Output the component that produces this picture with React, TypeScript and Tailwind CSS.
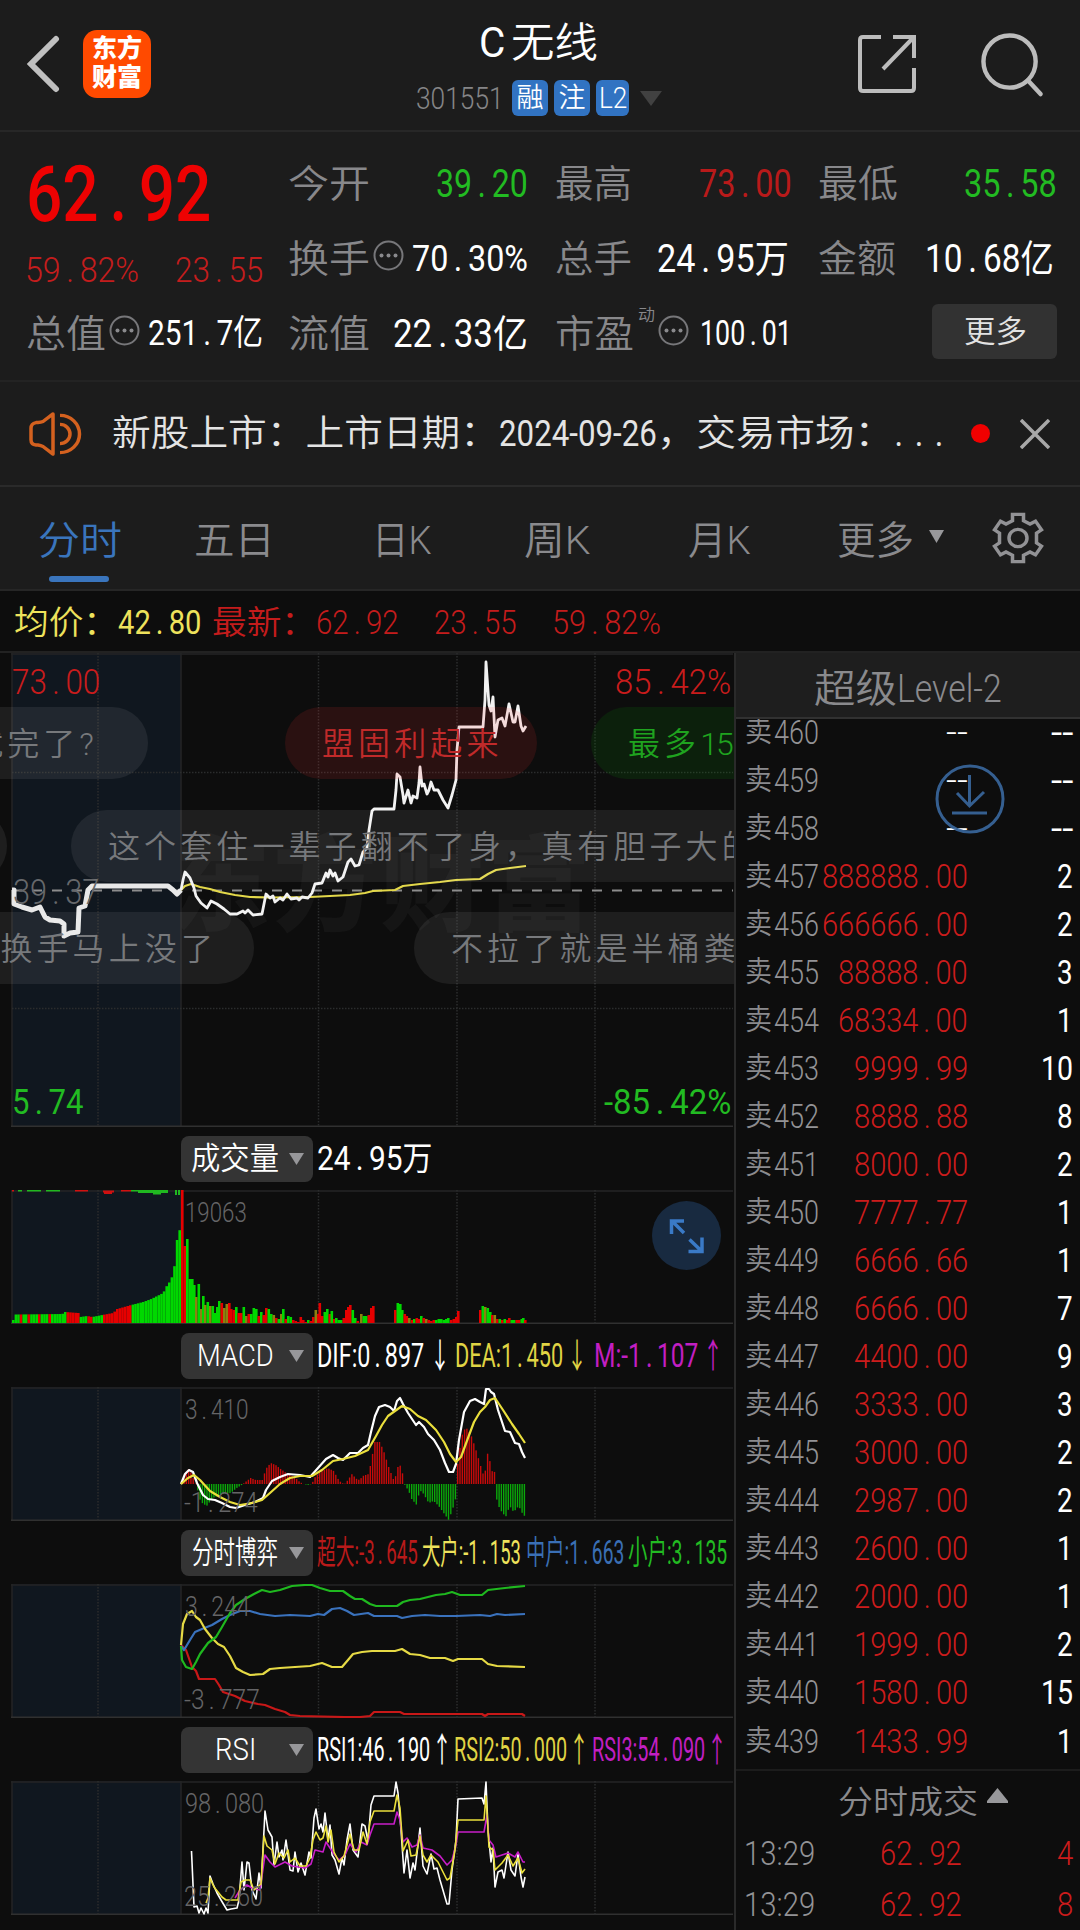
// src/App.tsx

import React, { useLayoutEffect, useRef, useState } from 'react';
import clsx from 'clsx';

interface FitProps {
  w: number;
  children: string;
  className?: string;
}

// Single line of text squeezed or stretched horizontally to a given width
function Fit({ w, children, className }: FitProps) {
  const ref = useRef<HTMLSpanElement>(null);
  const [scale, setScale] = useState(1);

  useLayoutEffect(() => {
    if (ref.current) setScale(w / ref.current.offsetWidth);
  }, [w, children]);

  return (
    <span className={clsx('inline-block shrink-0 whitespace-nowrap leading-none', className)} style={{ width: w }}>
      <span ref={ref} className="inline-block origin-left" style={{ transform: `scaleX(${scale})` }}>
        {children.split(/(\.)/).map((part, i) =>
          part === '.' ? (
            <span key={i} className="ml-[0.17em] tracking-[0.18em]">.</span>
          ) : (
            part
          )
        )}
      </span>
    </span>
  );
}

function MoreDots() {
  return (
    <svg className="h-[31px] w-[31px] shrink-0" viewBox="0 0 31 31" fill="none">
      <circle cx="15.5" cy="15.5" r="14" stroke="#77777a" strokeWidth="2" />
      <g fill="#8a8a8d">
        <circle cx="8.5" cy="15.5" r="2" />
        <circle cx="15.5" cy="15.5" r="2" />
        <circle cx="22.5" cy="15.5" r="2" />
      </g>
    </svg>
  );
}

/* ---------- header ---------- */

function Header() {
  return (
    <header className="flex h-[132px] items-start border-b-2 border-[#272727]">
      <svg className="ml-[26px] mt-[35px] h-[58px] w-[34px]" viewBox="0 0 34 58" fill="none">
        <path d="M30 4 L5 29 L30 54" stroke="#c0c0c0" strokeWidth="6" strokeLinecap="round" />
      </svg>
      <div className="ml-[23px] mt-[30px] flex h-[68px] w-[68px] flex-col items-center justify-center rounded-[14px] bg-[#ff4a00] pb-[3px] text-[25px] font-black leading-[29px] text-white">
        <span>东方</span>
        <span>财富</span>
      </div>

      <div className="ml-[265px] mt-[21px] flex w-[250px] flex-col">
        <div className="flex h-[44px] items-center gap-[6px] pl-[63px] text-white">
          <Fit w={26} className="text-[42px] font-normal">C</Fit>
          <Fit w={87} className="text-[41px]">无线</Fit>
        </div>
        <div className="mt-[15px] flex h-[36px] items-center">
          <Fit w={88} className="text-[32px] text-[#858587]">301551</Fit>
          <span className="ml-[8px] flex h-[36px] w-[36px] items-center justify-center rounded-md bg-[#3173c2] text-[27px] leading-none text-white">融</span>
          <span className="ml-[6px] flex h-[36px] w-[36px] items-center justify-center rounded-md bg-[#3173c2] text-[27px] leading-none text-white">注</span>
          <span className="ml-[6px] flex h-[36px] w-[33px] items-center justify-center rounded-md bg-[#3173c2] text-white">
            <Fit w={28} className="text-[29px]">L2</Fit>
          </span>
          <svg className="ml-[11px] h-[15px] w-[22px]" viewBox="0 0 22 16" preserveAspectRatio="none">
            <path d="M0 0 H22 L11 16 Z" fill="#414141" />
          </svg>
        </div>
      </div>

      <svg className="ml-[191px] mt-[34px] h-[60px] w-[60px]" viewBox="0 0 60 60" fill="none" stroke="#bcbcbc" strokeWidth="4">
        <path d="M24 3 H6 Q3 3 3 6 V54 Q3 57 6 57 H54 Q57 57 57 54 V34" />
        <path d="M36 3 H57 V24 M55 5 L26 35" />
      </svg>
      <svg className="ml-[64px] mt-[31px] h-[67px] w-[64px]" viewBox="0 0 64 68" fill="none" stroke="#bcbcbc" strokeWidth="4.5">
        <circle cx="28.500" cy="31" r="26.500" />
        <path d="M47 50 L60 64" strokeLinecap="round" />
      </svg>
    </header>
  );
}

/* ---------- quote ---------- */

interface CellProps {
  label: string;
  labelW: number;
  value: string;
  valueW: number;
  tone?: string;
  size?: string;
  dots?: boolean;
  sup?: string;
  className?: string;
}

function Cell({ label, labelW, value, valueW, tone = 'text-white', size = 'text-[38px]', dots, sup, className }: CellProps) {
  return (
    <div className={clsx('flex items-center justify-between', className)}>
      <div className="flex items-center">
        <Fit w={labelW} className="text-[38px] text-[#88888b]">{label}</Fit>
        {sup && <span className="mb-[36px] ml-[4px] text-[17px] leading-none text-[#88888b]">{sup}</span>}
        {dots && <div className="mb-[7px] ml-[3px]"><MoreDots /></div>}
      </div>
      <Fit w={valueW} className={clsx('font-normal', size, tone)}>{value}</Fit>
    </div>
  );
}

function Quote() {
  return (
    <section className="flex h-[250px] border-b-2 border-[#232323] pl-[26px]">
      <div className="flex w-[237px] flex-col pt-[16px]">
        <div className="flex h-[94px] items-center font-medium text-[#ee0202]">
          <Fit w={185} className="text-[77px]">62.92</Fit>
        </div>
        <div className="flex h-[56px] items-center justify-between text-[35px] text-[#c41d1d]">
          <Fit w={114} className="-ml-px">59.82%</Fit>
          <Fit w={88}>23.55</Fit>
        </div>
        <Cell className="h-[71px]" label="总值" labelW={80} dots value="251.7亿" valueW={115} size="text-[35px]" />
      </div>

      <div className="ml-[25px] flex w-[240px] flex-col pt-[14px]">
        <Cell className="h-[75px]" label="今开" labelW={82} value="39.20" valueW={92} tone="text-[#22bb22]" />
        <Cell className="h-[75px]" label="换手" labelW={82} dots value="70.30%" valueW={116} size="text-[37px]" />
        <Cell className="h-[75px]" label="流值" labelW={82} value="22.33亿" valueW={135} />
      </div>

      <div className="ml-[27px] flex w-[237px] flex-col pt-[14px]">
        <Cell className="h-[75px]" label="最高" labelW={77} value="73.00" valueW={93} tone="text-[#b91a1a]" />
        <Cell className="h-[75px] pr-[3px]" label="总手" labelW={77} value="24.95万" valueW={132} />
        <Cell className="h-[75px]" label="市盈" labelW={79} sup="动" dots value="100.01" valueW={92} size="text-[35px]" />
      </div>

      <div className="ml-[26px] flex w-[239px] flex-col pt-[14px]">
        <Cell className="h-[75px]" label="最低" labelW={80} value="35.58" valueW={93} tone="text-[#22bb22]" />
        <Cell className="h-[75px] pr-[3px]" label="金额" labelW={78} value="10.68亿" valueW={129} />
        <div className="flex h-[70px] items-center justify-end">
          <button className="flex h-[55px] w-[125px] items-center justify-center rounded-md bg-[#323232] text-[#e2e2e2]">
            <Fit w={63} className="text-[31px]">更多</Fit>
          </button>
        </div>
      </div>
    </section>
  );
}

/* ---------- notice + tabs ---------- */

function Notice() {
  return (
    <section className="flex h-[105px] items-center border-b-2 border-[#2a2a2a] text-[36px] text-[#e4e4e4]">
      <svg className="ml-[28px] h-[44px] w-[54px]" viewBox="0 0 54 46" preserveAspectRatio="none" fill="none" stroke="#d4611f" strokeWidth="3.500">
        <path d="M25 2 L15 10 Q13 11 10 11 H8 Q3 12 3 17 V29 Q3 34 8 34.500 H10 Q13 35 15 36 L25 44 Z" strokeLinejoin="round" />
        <path d="M32 3.500 A19.500 19.500 0 0 1 32 42.500 M32 13 A10 10 0 0 1 32 33" />
      </svg>
      <Fit w={387} className="ml-[30px]">新股上市：上市日期：</Fit>
      <Fit w={158} className="font-normal">2024-09-26</Fit>
      <Fit w={237}>，交易市场：</Fit>
      <Fit w={60} className="-ml-[5px] font-normal">...</Fit>
      <span className="ml-[22px] h-[19px] w-[19px] rounded-full bg-[#f00000]" />
      <svg className="ml-[30px] h-[30px] w-[30px]" viewBox="0 0 30 30" stroke="#a8a8a8" strokeWidth="3.500">
        <path d="M1 1 L29 29 M29 1 L1 29" />
      </svg>
    </section>
  );
}

function Tabs() {
  return (
    <nav className="flex h-[104px] items-center border-b-2 border-[#262626] text-[39px] text-[#8a8a8d]">
      <div className="relative ml-[38px] flex h-full items-center pt-[6px] text-[#3a75bd]">
        <Fit w={84}>分时</Fit>
        <span className="absolute bottom-[7px] left-[11px] h-[6px] w-[60px] rounded-full bg-[#3a75bd]" />
      </div>
      <div className="flex items-center pt-[7px]">
        <Fit w={81} className="ml-[72px]">五日</Fit>
        <Fit w={60} className="ml-[97px]">日K</Fit>
        <Fit w={67} className="ml-[92px]">周K</Fit>
        <Fit w={63} className="ml-[97px]">月K</Fit>
        <Fit w={77} className="ml-[86px]">更多</Fit>
      </div>
      <svg className="mb-[4px] ml-[15px] h-[13px] w-[15px]" viewBox="0 0 15 13">
        <path d="M0 0 H15 L7.500 13 Z" fill="#98989b" />
      </svg>
      <svg className="ml-[48px] h-[52px] w-[52px]" viewBox="0 0 52 54" preserveAspectRatio="none" fill="none" stroke="#929295" strokeWidth="3.500">
        <path d="M20.500 2.500 H31.500 V9 L38 12.500 L43.500 9.500 L49.500 18.500 L44.500 22 V32 L49.500 35.500 L43.500 44.500 L38 41.500 L31.500 45 V51.500 H20.500 V45 L14 41.500 L8.500 44.500 L2.500 35.500 L7.500 32 V22 L2.500 18.500 L8.500 9.500 L14 12.500 L20.500 9 Z" />
        <circle cx="26" cy="27" r="9" />
      </svg>
    </nav>
  );
}

function AverageBar() {
  return (
    <div className="flex h-[62px] items-center border-b-2 border-[#222222] pl-[14px] pt-[3px] text-[33px] text-[#c41c1c]">
      <Fit w={104} className="text-[#eee25c]">均价：</Fit>
      <Fit w={83} className="font-normal text-[#eee25c]">42.80</Fit>
      <Fit w={104} className="ml-[11px]">最新：</Fit>
      <Fit w={83}>62.92</Fit>
      <Fit w={83} className="ml-[35px]">23.55</Fit>
      <Fit w={109} className="ml-[35px]">59.82%</Fit>
    </div>
  );
}

/* ---------- chart data ---------- */

const PRE_PRICE = '12,890 14,890 14,904 22,907 32,910 40,907 45,917 50,920 60,921 64,924 64,936 70,933 78,932 79,908 85,906 88,890 92,886 168,886 173,890 177,894 181,890';
const PRICE = '181,890 183,880 185,872 190,878 194,888 196,896 201,903 207,908 211,901 217,904 224,909 230,914 237,914 243,911 245,913 248,910 253,915 262,914 266,894 270,898 273,896 275,902 280,898 283,900 287,894 291,899 297,898 299,900 302,897 308,898 312,893 315,884 322,883 326,873 328,877 330,870 333,876 335,873 338,881 343,877 348,862 351,859 355,866 359,865 363,852 367,848 369,830 372,811 374,809 394,809 396,790 397,774 400,777 403,795 404,803 408,790 411,803 413,796 417,798 419,783 420,767 422,786 424,784 427,794 429,790 431,782 434,790 438,790 443,800 448,808 452,795 456,780 457,750 459,727 483,727 485,700 486,662 489,705 491,711 493,697 495,737 498,720 502,718 505,726 509,704 513,722 515,722 518,706 521,726 523,731 526,726';
const AVERAGE = '181,890 185,886 191,884 200,887 210,889 220,892 235,895 250,897 270,897.5 310,897 330,896 350,895 365,893 373,891 395,890 403,886 420,884 440,882 456,880 480,879 488,874 496,870 510,868 526,866';

const DIF = '181,1484 185,1474 189,1470 193,1472 197,1483 203,1495 208,1499 215,1500 222,1503 230,1507 236,1508 245,1505 255,1502 263,1498 266,1490 272,1481 280,1477 288,1474 300,1475 310,1477 318,1468 326,1459 333,1455 338,1458 343,1460 350,1453 358,1453 363,1448 368,1445 371,1432 375,1416 379,1407 385,1405 390,1407 394,1411 397,1401 400,1398 403,1404 408,1413 412,1419 416,1425 419,1422 424,1427 428,1434 434,1440 440,1450 445,1463 449,1472 453,1472 456,1464 459,1440 464,1412 470,1401 475,1399 480,1402 484,1404 486,1389 489,1389 491,1392 494,1394 498,1410 505,1431 510,1432 515,1443 519,1444 522,1452 525,1458';
const DEA = '181,1484 188,1478 194,1475 200,1480 210,1491 220,1497 230,1502 240,1505 252,1503 262,1500 270,1493 280,1484 290,1478 300,1476 312,1476 322,1470 333,1461 343,1459 355,1456 368,1450 376,1436 382,1425 388,1416 395,1411 402,1406 410,1409 418,1416 426,1420 436,1430 444,1442 450,1454 456,1462 461,1457 468,1438 474,1422 480,1412 485,1407 490,1400 495,1398 503,1410 512,1424 519,1434 525,1443';

const GAME_SMALL = '181,1646 182,1660 186,1667 192,1669 196,1662 200,1654 208,1643 216,1637 222,1627 230,1613 236,1605 245,1599 254,1594 262,1590 270,1592 280,1590 292,1586 305,1585 312,1585 320,1588 330,1591 343,1591 350,1596 355,1599 362,1599 370,1604 376,1606 397,1606 403,1602 410,1600 420,1599 436,1595 445,1594 452,1592 460,1595 482,1595 488,1590 505,1588 525,1586';
const GAME_MID = '181,1646 184,1650 190,1640 195,1632 202,1629 212,1625 222,1619 230,1615 240,1611 250,1611 260,1614 275,1616 290,1615 310,1616 318,1614 324,1615 332,1609 340,1608 347,1611 354,1615 368,1613 374,1616 397,1616 402,1618 412,1616 425,1615 440,1616 456,1616 480,1615 490,1616 497,1614 505,1615 525,1614';
const GAME_BIG = '181,1645 183,1624 187,1614 192,1611 196,1617 200,1620 205,1629 212,1638 218,1644 224,1647 230,1656 236,1668 243,1672 250,1675 263,1674 270,1669 280,1668 295,1667 310,1666 322,1663 332,1667 342,1667 348,1660 353,1654 362,1652 372,1651 395,1651 402,1649 410,1654 420,1655 430,1658 445,1658 453,1661 458,1659 482,1659 488,1664 497,1666 525,1667';
const GAME_SUPER = '181,1645 186,1650 192,1667 196,1671 199,1679 215,1679 219,1685 223,1692 235,1696 245,1701 258,1704 265,1705 275,1709 285,1712 290,1715 300,1716 345,1717 360,1717 370,1716 374,1712 400,1712 404,1714 482,1714 485,1716 488,1714 522,1714 525,1716';

const RSI1 = '191.5,1851 194,1907 197,1906 199,1913 201,1908 204,1914 206,1908 208,1913 210,1876 213,1884 217,1893 221,1900 224,1905 227,1910 231,1909 237,1908 239,1900 242,1862 244,1890 247,1862 249,1863 252,1890 256,1899 259,1873 261,1888 265,1811 268,1830 272,1837 274,1865 277,1842 279,1857 282,1850 283,1860 286,1840 290,1870 293,1871 295,1852 298,1872 301,1863 305,1875 309,1852 311,1858 314,1818 316,1809 319,1829 321,1824 323,1832 325,1813 328,1840 330,1825 332,1855 335,1860 339,1874 342,1858 344,1865 347,1840 350,1824 353,1850 358,1857 362,1824 365,1826 368,1841 371,1805 374,1796 394,1796 396,1782 398,1793 401,1830 404,1873 407,1850 410,1878 413,1863 415,1870 420,1828 423,1866 427,1874 431,1854 434,1869 437,1868 440,1880 447,1904 449,1904 452,1870 456,1840 458,1799 482,1798 484,1804 486,1782 488,1830 491,1862 493,1848 495,1887 498,1872 502,1870 504,1878 508,1852 511,1870 515,1876 518,1854 521,1877 523,1887 525,1877';
const RSI2 = '206,1903 208,1898 210,1878 214,1887 218,1892 222,1897 226,1900 238,1900 241,1882 245,1880 250,1880 254,1890 261,1884 264,1836 267,1846 272,1850 275,1864 279,1853 284,1858 288,1850 290,1862 295,1858 300,1866 306,1866 310,1858 313,1840 316,1832 320,1840 323,1838 326,1826 328,1842 331,1830 334,1852 339,1862 344,1856 350,1834 354,1850 359,1850 363,1832 367,1844 370,1822 374,1811 394,1811 397,1795 400,1808 403,1851 408,1840 411,1856 416,1855 420,1836 423,1855 427,1862 431,1855 438,1862 447,1880 450,1878 455,1850 458,1820 484,1820 486,1796 489,1847 493,1850 495,1870 502,1863 508,1855 513,1866 518,1858 522,1873 525,1869';
const RSI3 = '235,1898 240,1890 247,1885 252,1888 260,1890 265,1855 270,1862 275,1867 285,1862 292,1866 305,1868 311,1864 315,1850 323,1852 326,1842 330,1848 334,1854 339,1860 345,1855 350,1844 356,1852 361,1842 367,1845 370,1835 374,1824 394,1824 397,1812 400,1820 403,1842 407,1838 412,1847 417,1845 420,1835 423,1848 432,1850 440,1856 447,1865 452,1860 456,1845 458,1832 484,1832 487,1815 489,1840 493,1845 496,1857 508,1853 515,1857 518,1852 523,1862 525,1862';

// [x, height] key points, bars in between are interpolated
const HIST_KEYS: [number, number][] = [
  [181, 0], [184, 8], [187, 16], [190, 12], [195, 0], [197, -6], [200, -18], [206, -22], [212, -14], [222, -10], [230, -9], [236, -4], [241, -1],
  [246, 3], [250, 6], [255, 4], [262, 4], [265, 15], [270, 21], [275, 19], [280, 15], [287, 10], [294, 7], [299, 2], [303, 0], [307, -1], [311, 0],
  [315, 8], [320, 12], [327, 16], [333, 13], [338, 4], [341, 1], [344, 0], [348, 5], [351, 10], [356, 5], [359, 4], [362, 8], [368, 10], [371, 25],
  [374, 42], [379, 42], [383, 33], [388, 17], [393, 4], [394, 2], [396, 15], [399, 20], [402, 10], [403, 1], [408, -7], [411, -15], [416, -21],
  [419, -6], [423, -10], [428, -19], [433, -17], [438, -22], [443, -29], [448, -36], [452, -25], [456.5, -9], [457, 20], [461, 48], [465, 57],
  [470, 50], [475, 35], [480, 18], [484, 5], [486, 33], [489, 24], [491, 13], [494, 12], [495, -12], [499, -25], [505, -33], [509, -22],
  [513, -28], [518, -22], [523, -32], [526, -31],
];

function sample(keys: [number, number][], x: number) {
  for (let i = 1; i < keys.length; i++) {
    const [x0, y0] = keys[i - 1];
    const [x1, y1] = keys[i];
    if (x <= x1) return y0 + ((y1 - y0) * (x - x0)) / (x1 - x0);
  }
  return 0;
}

// [x, height, colour] r = red, g = green, o = mixed
type Bar = [number, number, 'r' | 'g' | 'o'];

const COLORS = { r: '#e60000', g: '#00d800', o: '#8d8110' };

const VOLUME: Bar[] = [
  [182, 133, 'r'], [184.5, 77, 'r'], [187, 84, 'g'], [189.500, 44, 'g'], [192, 44, 'g'], [194, 38, 'g'], [196, 26, 'o'], [198.500, 39, 'g'], [201, 14, 'o'],
  [203, 27, 'g'], [205, 18, 'o'], [207.500, 21, 'g'], [210, 17, 'o'], [212.500, 17, 'g'], [215, 10, 'g'], [217, 16, 'g'], [219, 22, 'g'], [221.500, 20, 'r'],
  [224, 15, 'o'], [226.500, 19, 'o'], [229, 20, 'r'], [231, 14, 'r'], [233.500, 13, 'r'], [236, 16, 'g'], [238.500, 10, 'r'], [241, 10, 'r'], [243.500, 16, 'g'],
  [246, 7, 'o'], [248.500, 9, 'r'], [251, 9, 'g'], [253.500, 15, 'g'], [256, 14, 'g'], [258.500, 7, 'r'], [261, 11, 'g'], [263.500, 8, 'r'], [266, 15, 'r'],
  [268.500, 14, 'g'], [271, 9, 'g'], [273.500, 8, 'o'], [276, 5, 'r'], [278.500, 4, 'g'], [281, 9, 'o'], [283, 14, 'g'], [285.500, 4, 'r'], [288, 7, 'g'],
  [290.500, 6, 'g'], [293, 3, 'r'], [295.500, 2, 'r'], [298, 1, 'r'], [300.500, 6, 'r'], [303, 3, 'r'], [305.500, 1, 'r'], [308, 3, 'g'], [310.500, 2, 'r'],
  [313, 6, 'r'], [315.500, 13, 'o'], [318, 9, 'r'], [319.500, 20, 'r'], [322, 7, 'r'], [324.500, 11, 'g'], [327, 14, 'g'], [329.500, 9, 'r'], [331.500, 12, 'g'],
  [334, 4, 'r'], [336, 5, 'g'], [338.500, 3, 'g'], [341, 3, 'g'], [343.500, 5, 'r'], [346, 13, 'r'], [348, 16, 'r'], [350, 18, 'r'], [352.500, 13, 'g'],
  [355, 5, 'g'], [357.500, 2, 'r'], [361, 9, 'o'], [363.500, 7, 'g'], [366, 7, 'g'], [368.500, 8, 'r'], [371, 15, 'r'], [373, 17, 'r'], [395, 13, 'r'],
  [397.500, 20, 'g'], [400, 19, 'g'], [402, 13, 'g'], [404.500, 9, 'r'], [406.500, 7, 'r'], [409, 5, 'o'], [412, 3, 'r'], [414, 4, 'g'], [416.500, 5, 'r'],
  [419, 4, 'r'], [421, 7, 'g'], [423.500, 5, 'r'], [426, 4, 'o'], [428.500, 3, 'r'], [431, 2, 'r'], [433.500, 3, 'r'], [436, 3, 'g'], [438.500, 4, 'g'],
  [441, 4, 'g'], [443.500, 3, 'g'], [446, 4, 'g'], [448, 5, 'g'], [451, 3, 'r'], [453.500, 4, 'r'], [456, 6, 'r'], [458, 12, 'r'], [480, 13, 'r'],
  [482.500, 17, 'g'], [485, 16, 'o'], [487.500, 15, 'g'], [490, 11, 'g'], [492, 8, 'r'], [494.500, 8, 'o'], [497, 4, 'r'], [499.500, 4, 'g'], [502, 3, 'r'],
  [504.500, 4, 'g'], [507, 3, 'r'], [509, 5, 'r'], [511.500, 3, 'g'], [514, 3, 'g'], [516.500, 3, 'r'], [519, 3, 'r'], [521.500, 4, 'g'], [523, 5, 'g'], [525, 3, 'r'],
];

const PRE_KEYS: [number, number][] = [
  [12, 3], [14, 8.500], [61, 9], [64, 11], [77, 10], [79, 6], [86, 7], [91, 6], [101, 8], [112, 10], [116, 14], [130, 18], [142, 21], [150, 24],
  [156, 27], [162, 30], [166, 38], [170, 43], [172, 52], [174, 60], [175.500, 62], [176, 97], [178, 96], [179, 88], [182, 87],
];

function preColor(x: number) {
  if (x > 130) return COLORS.g;
  if (x > 101) return COLORS.r;
  if (x > 93) return COLORS.g;
  if (x > 85) return x > 90 ? COLORS.g : COLORS.r;
  if (x > 77) return COLORS.g;
  if (x > 65) return COLORS.r;
  return Math.round(x / 2.4) % 4 === 0 ? COLORS.r : COLORS.g;
}

/* ---------- charts ---------- */

interface FrameProps {
  top: number;
  height: number;
  className: string;
  children: React.ReactNode;
}

function Frame({ top, height, className, children }: FrameProps) {
  const bottom = top + height;
  return (
    <svg className={clsx('block w-[734px]', className)} viewBox={`0 ${top} 734 ${height}`} fill="none" strokeLinejoin="round">
      <rect x="12" y={top} width="169" height={height} fill="#10171f" />
      <g stroke="#242526" strokeWidth="1.500">
        <path d={`M11 ${top + 1} H733 M12 ${top} V${bottom} M181 ${top} V${bottom}`} />
        <path d={`M11 ${bottom - 0.8} H733`} stroke="#303030" />
        <path d={`M98 ${top} V${bottom} M318.500 ${top} V${bottom} M457 ${top} V${bottom} M595 ${top} V${bottom}`} strokeDasharray="1.500 1.500" stroke="#2b2c2d" />
      </g>
      {children}
    </svg>
  );
}

interface PillProps {
  className: string;
  children?: React.ReactNode;
}

function Pill({ className, children }: PillProps) {
  return (
    <div className={clsx('absolute flex h-[72px] items-center whitespace-nowrap rounded-full px-[37px] pt-[2px] text-[32px] leading-none tracking-[4.1px]', className)}>
      {children}
    </div>
  );
}

function PriceChart() {
  return (
    <div className="relative h-[474px] overflow-hidden">
      <span className="absolute left-[166px] top-[183px] whitespace-nowrap text-[104px] font-black leading-none tracking-[3px] text-[#151515]">东方财富</span>
      <div className="relative">
        <Frame top={653} height={474} className="h-[474px]">
          <path d="M12 772.500 H733 M12 1008.500 H733" stroke="#2b2c2d" strokeWidth="1.500" strokeDasharray="1.500 1.500" />
          <path d="M12 890.500 H733" stroke="#8c8c8c" strokeWidth="2" strokeDasharray="10 10" />
          <polyline points={AVERAGE} stroke="#e3d84a" strokeWidth="2.200" />
          <polyline points={PRE_PRICE} stroke="#e8e8e8" strokeWidth="5" />
          <polyline points={PRICE} stroke="#f2f2f2" strokeWidth="2.800" />
        </Frame>
      </div>

      <div className="absolute left-[12px] top-[12px] flex text-[35px] text-[#c91c1c]"><Fit w={88}>73.00</Fit></div>
      <div className="absolute right-[3px] top-[12px] flex text-[35px] text-[#c91c1c]"><Fit w={116}>85.42%</Fit></div>
      <div className="absolute left-[13px] top-[222px] flex text-[35px] text-[#66686b]"><Fit w={86}>39.37</Fit></div>
      <div className="absolute left-[12px] top-[432px] flex text-[35px] font-normal text-[#22bb22]"><Fit w={71}>5.74</Fit></div>
      <div className="absolute right-[3px] top-[432px] flex text-[35px] font-normal text-[#22bb22]"><Fit w={127}>-85.42%</Fit></div>

      <Pill className="right-[586px] top-[54px] bg-white/7 pr-[50px] text-[#77797c]">就完了?</Pill>
      <Pill className="left-[285px] top-[54px] w-[252px] bg-[#ff3030]/12 text-[#c02a2a]">盟固利起来</Pill>
      <Pill className="left-[591px] top-[54px] w-[300px] bg-[#00c800]/10 text-[#1fa31f]">
        最多<span className="tracking-[-2px]">15</span><span className="ml-[4px]">分</span>
      </Pill>
      <Pill className="right-[727px] top-[157px] w-[200px] bg-white/7" />
      <Pill className="left-[71px] top-[157px] w-[800px] bg-white/7 text-[#77797c]">这个套住一辈子翻不了身，真有胆子大的</Pill>
      <Pill className="right-[480px] top-[259px] bg-white/7 text-[#77797c]">换手马上没了</Pill>
      <Pill className="left-[414px] top-[259px] w-[500px] bg-white/7 text-[#77797c]">不拉了就是半桶粪</Pill>
    </div>
  );
}

interface PanelTitleProps {
  name: string;
  nameW: number;
  children: React.ReactNode;
}

function PanelTitle({ name, nameW, children }: PanelTitleProps) {
  return (
    <div className="flex h-[63px] items-center pl-[181px]">
      <button className="flex h-[46px] w-[132px] shrink-0 items-center rounded-lg bg-[#343434] text-white">
        <span className="flex w-[108px] justify-center">
          <Fit w={nameW} className="text-[31px]">{name}</Fit>
        </span>
        <svg className="h-[12px] w-[15px]" viewBox="0 0 15 12">
          <path d="M0 0 H15 L7.500 12 Z" fill="#97979a" />
        </svg>
      </button>
      <div className="ml-[4px] flex items-center text-[33px] font-normal">{children}</div>
    </div>
  );
}

function Arrow({ up, className }: { up?: boolean; className?: string }) {
  return (
    <span className={clsx('flex w-[10px] shrink-0 justify-center', className)}>
      <Fit w={20} className="-mx-[5px] text-[34px]">{up ? '↑' : '↓'}</Fit>
    </span>
  );
}

function RangeLabels({ high, low, w, lowW }: { high: string; low?: string; w: number; lowW?: number }) {
  return (
    <>
      <div className="absolute left-[185px] top-[9px] flex text-[28px] text-[#656567]"><Fit w={w}>{high}</Fit></div>
      {low && <div className="absolute left-[184px] top-[102px] flex text-[28px] text-[#656567]"><Fit w={lowW ?? w}>{low}</Fit></div>}
    </>
  );
}

function VolumePanel() {
  const pre = Array.from({ length: 65 }, (_, i) => 12 + i * 2.6);
  return (
    <div>
      <PanelTitle name="成交量" nameW={88}>
        <Fit w={115} className="text-white">24.95万</Fit>
      </PanelTitle>
      <div className="relative h-[134px]">
        <Frame top={1190} height={134} className="h-[134px]">
          {pre.map((x) => (
            <rect key={x} x={x} y={1323 - sample(PRE_KEYS, x)} width="2.6" height={sample(PRE_KEYS, x)} fill={preColor(x)} />
          ))}
          <path d="M12 1190.500 H14 M75 1190.500 H88 M103 1191.500 H114 M104 1193 H112 M121 1190.500 H131" stroke="#d01010" strokeWidth="2" />
          <path d="M18 1190.500 H22 M27 1190.500 H41 M46 1190.500 H60 M131 1190.500 H168 M138 1192 H168 M153 1193.500 H161 M176 1190 V1195 M179 1190 V1195" stroke="#20b820" strokeWidth="2" />
          {VOLUME.map(([x, h, c]) => (
            <rect key={x} x={x - 1} y={1323 - h} width="2.6" height={h} fill={COLORS[c]} />
          ))}
        </Frame>
        <RangeLabels high="19063" w={62} />
        <svg className="absolute left-[652px] top-[11px] h-[69px] w-[69px]" viewBox="0 0 69 69" fill="none" stroke="#3a7ac6" strokeWidth="3.500">
          <circle cx="34.500" cy="34.500" r="34.500" fill="#182a40" stroke="none" />
          <path d="M19.500 33 V20 H32 M20 20 L32 32" />
          <path d="M36.500 50.500 H50 V36.500 M50 50.500 L37.500 38.500" />
        </svg>
      </div>
    </div>
  );
}

function MacdPanel() {
  const bars = Array.from({ length: 150 }, (_, i) => 181 + i * 2.3);
  return (
    <div>
      <PanelTitle name="MACD" nameW={77}>
        <Fit w={107} className="text-white">DIF:0.897</Fit>
        <Arrow className="ml-[11px] text-white" />
        <Fit w={108} className="ml-[10px] text-[#e0d444]">DEA:1.450</Fit>
        <Arrow className="ml-[9px] text-[#e0d444]" />
        <Fit w={104} className="ml-[12px] text-[#c21fc2]">M:-1.107</Fit>
        <Arrow up className="ml-[10px] text-[#c21fc2]" />
      </PanelTitle>
      <div className="relative h-[134px]">
        <Frame top={1387} height={134} className="h-[134px]">
          {bars.map((x) => {
            const h = sample(HIST_KEYS, x);
            return <rect key={x} x={x} y={h > 0 ? 1484 - h : 1484} width="1.4" height={Math.abs(h)} fill={h > 0 ? '#c80a0a' : '#0aa80a'} />;
          })}
          <polyline points={DIF} stroke="#ffffff" strokeWidth="2.200" />
          <polyline points={DEA} stroke="#eadf3c" strokeWidth="2.200" />
        </Frame>
        <RangeLabels high="3.410" low="-1.274" w={64} lowW={74} />
      </div>
    </div>
  );
}

function GamePanel() {
  return (
    <div>
      <PanelTitle name="分时博弈" nameW={86}>
        <Fit w={101} className="text-[#b91a1a]">超大:-3.645</Fit>
        <Fit w={99} className="ml-[4px] text-[#eee25c]">大户:-1.153</Fit>
        <Fit w={98} className="ml-[5px] text-[#3a6fb5]">中户:1.663</Fit>
        <Fit w={99} className="ml-[4px] text-[#22bb22]">小户:3.135</Fit>
      </PanelTitle>
      <div className="relative h-[134px]">
        <Frame top={1584} height={134} className="h-[134px]">
          <polyline points={GAME_SUPER} stroke="#c81818" strokeWidth="2.200" />
          <polyline points={GAME_MID} stroke="#3a72bd" strokeWidth="2.200" />
          <polyline points={GAME_BIG} stroke="#e6da45" strokeWidth="2.200" />
          <polyline points={GAME_SMALL} stroke="#1fb81f" strokeWidth="2.200" />
        </Frame>
        <RangeLabels high="3.244" low="-3.777" w={65} lowW={76} />
      </div>
    </div>
  );
}

function RsiPanel() {
  return (
    <div>
      <PanelTitle name="RSI" nameW={41}>
        <Fit w={113} className="text-white">RSI1:46.190</Fit>
        <Arrow up className="ml-[7px] text-white" />
        <Fit w={113} className="ml-[7px] text-[#e0d444]">RSI2:50.000</Fit>
        <Arrow up className="ml-[7px] text-[#e0d444]" />
        <Fit w={113} className="ml-[8px] text-[#c21fc2]">RSI3:54.090</Fit>
        <Arrow up className="ml-[7px] text-[#c21fc2]" />
      </PanelTitle>
      <div className="relative h-[134px]">
        <Frame top={1781} height={134} className="h-[134px]">
          <polyline points={RSI1} stroke="#ffffff" strokeWidth="1.600" />
          <polyline points={RSI3} stroke="#c81ec8" strokeWidth="1.600" />
          <polyline points={RSI2} stroke="#eadf3c" strokeWidth="1.600" />
        </Frame>
        <RangeLabels high="98.080" low="25.260" w={79} />
      </div>
    </div>
  );
}

/* ---------- order book ---------- */

const ORDERS: [number, string, string][] = [
  [460, '--', '--'], [459, '--', '--'], [458, '--', '--'],
  [457, '888888.00', '2'], [456, '666666.00', '2'], [455, '88888.00', '3'], [454, '68334.00', '1'], [453, '9999.99', '10'],
  [452, '8888.88', '8'], [451, '8000.00', '2'], [450, '7777.77', '1'], [449, '6666.66', '1'], [448, '6666.00', '7'],
  [447, '4400.00', '9'], [446, '3333.00', '3'], [445, '3000.00', '2'], [444, '2987.00', '2'], [443, '2600.00', '1'],
  [442, '2000.00', '1'], [441, '1999.00', '2'], [440, '1580.00', '15'], [439, '1433.99', '1'],
];

const TRADES: [string, string, string][] = [
  ['13:29', '62.92', '4'],
  ['13:29', '62.92', '8'],
];

function OrderBook() {
  return (
    <aside className="flex w-[346px] flex-col border-l-2 border-[#2a2a2a]">
      <div className="z-10 flex h-[66px] shrink-0 items-center justify-center border-b-2 border-[#313131] bg-[#1e1e1e] pt-[8px] text-[39px] text-[#8a8a8d]">
        <Fit w={83}>超级</Fit>
        <Fit w={105} className="text-[38px]">Level-2</Fit>
      </div>

      <div className="relative h-[1050px] shrink-0">
        <div className="-mt-[11px]">
          {ORDERS.map(([level, price, qty]) => {
            const empty = price === '--';
            return (
              <div key={level} className="flex h-[48.06px] items-center pl-[9px] pr-[7px] text-[33px]">
                <Fit w={27} className="text-[29px] text-[#8a8a8d]">卖</Fit>
                <Fit w={45} className="ml-[2px] text-[#939396]">{String(level)}</Fit>
                <span className={clsx('flex w-[149px] justify-end', empty ? 'text-white' : 'text-[#cc1c1c]')}>
                  <Fit w={empty ? 22 : price.length * 16 + 2}>{price}</Fit>
                </span>
                <span className="flex flex-1 justify-end font-normal text-white">
                  <Fit w={empty ? 22 : qty.length * 16}>{qty}</Fit>
                </span>
              </div>
            );
          })}
        </div>
        <svg className="absolute left-[199px] top-[45px] h-[70px] w-[70px] opacity-90" viewBox="0 0 70 70" fill="none" stroke="#3a689f" strokeWidth="3">
          <circle cx="35" cy="35" r="33" />
          <path d="M34.500 11 V42 M22 29 L34.500 42 L49 28 M17 49 H52" />
        </svg>
      </div>

      <div className="border-t-2 border-[#1c1c1c] text-[33px]">
        <div className="flex h-[57px] items-center pl-[102px] pt-[5px] text-[#8a8a8d]">
          <Fit w={140} className="text-[32px]">分时成交</Fit>
          <svg className="mb-[14px] ml-[9px] h-[15px] w-[21px]" viewBox="0 0 21 15">
            <path d="M10.500 0 L21 13 V15 H0 V13 Z" fill="#98989b" />
          </svg>
        </div>
        {TRADES.map(([time, price, qty], i) => (
          <div key={i} className="flex h-[51px] items-center justify-between pl-[8px] pr-[7px] text-[#cc1c1c]">
            <Fit w={71} className="text-[#939396]">{time}</Fit>
            <span className="flex w-[147px] justify-end"><Fit w={82}>{price}</Fit></span>
            <span className="flex w-[111px] justify-end"><Fit w={16}>{qty}</Fit></span>
          </div>
        ))}
      </div>
    </aside>
  );
}

export default function App() {
  return (
    <div className="h-[1930px] w-[1080px] overflow-hidden bg-[#0d0d0d] font-['Roboto','Noto_Sans_CJK_SC',sans-serif] font-[350]">
      <div className="bg-[#1c1c1c]">
        <Header />
        <Quote />
        <Notice />
        <Tabs />
      </div>
      <AverageBar />
      <main className="flex h-[1277px]">
        <div className="w-[734px] shrink-0 overflow-hidden">
          <PriceChart />
          <VolumePanel />
          <MacdPanel />
          <GamePanel />
          <RsiPanel />
        </div>
        <OrderBook />
      </main>
    </div>
  );
}
